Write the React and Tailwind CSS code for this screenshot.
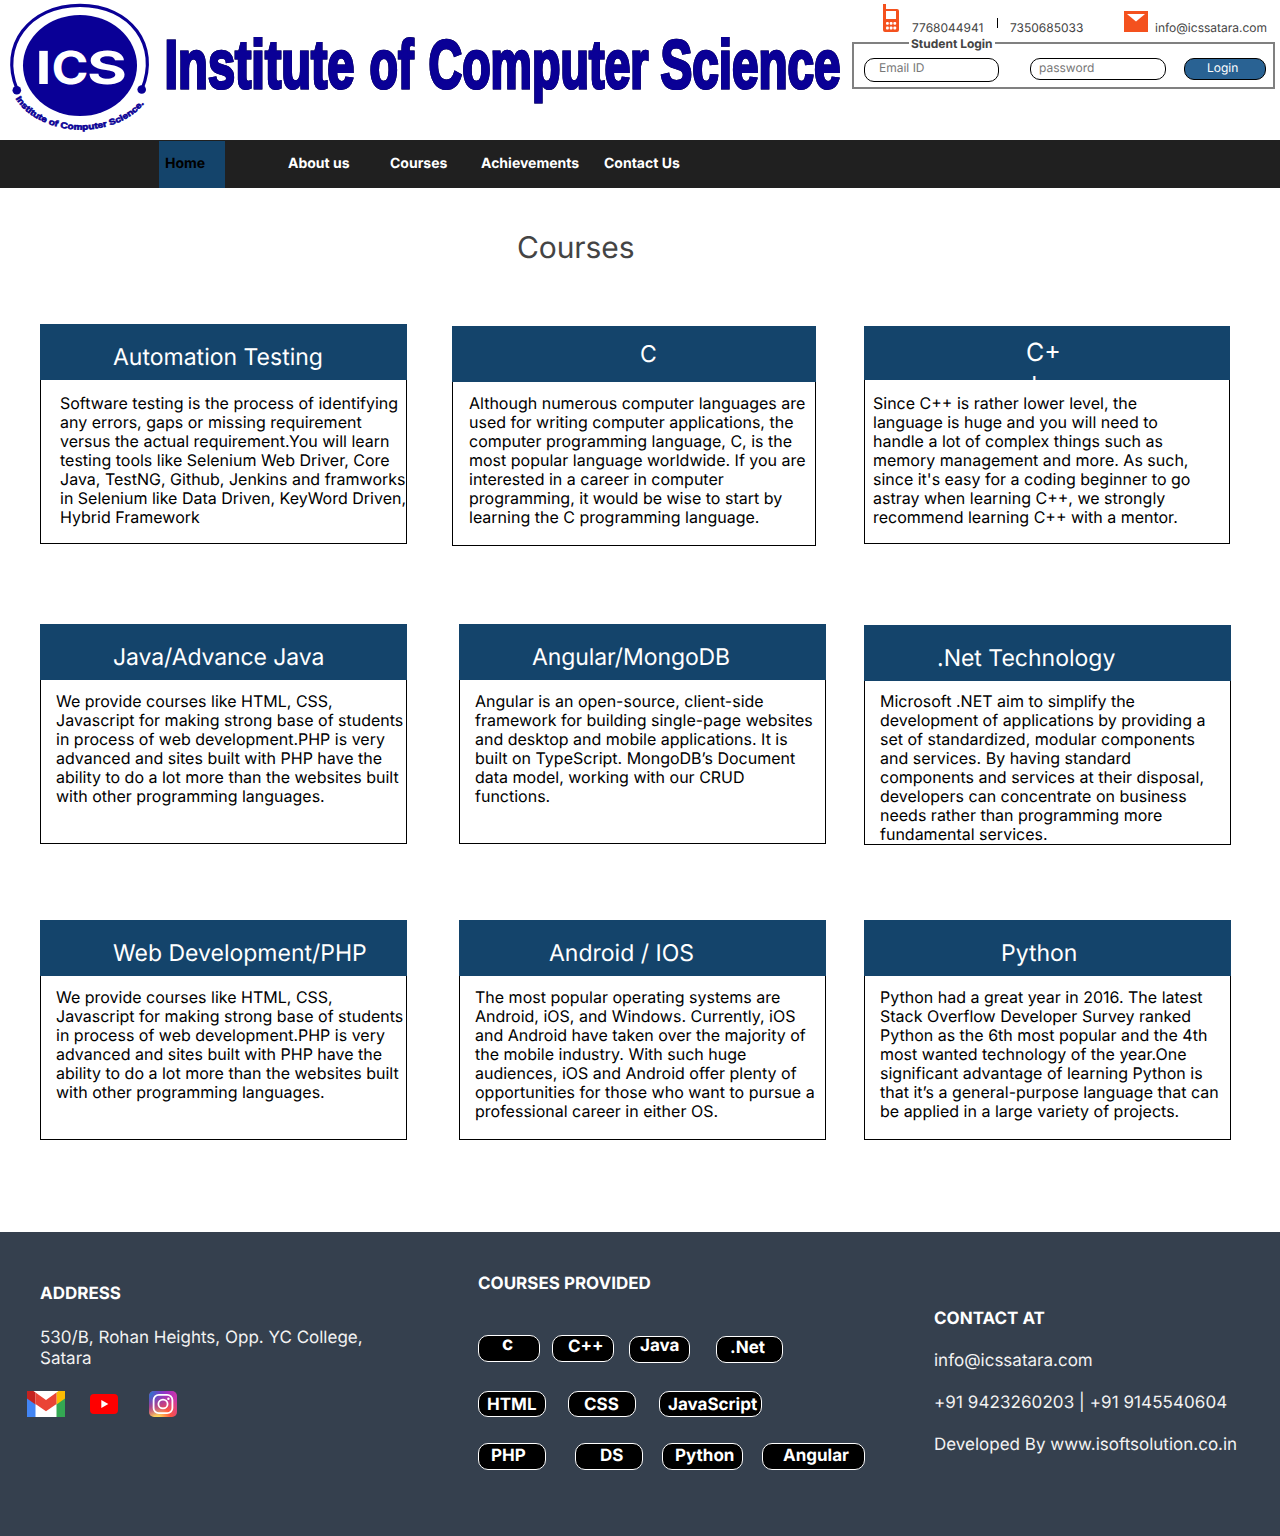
import React from "react";

const titleWords = [
  ["Institute", 164.5, 190],
  ["of", 369.5, 44],
  ["Computer", 428.5, 220],
  ["Science", 660.5, 180],
];

const initials = [
  ["I", 35.5, 16],
  ["C", 51.5, 37],
  ["S", 87, 40],
];

function Logo() {
  return (
    <svg width="850" height="140" viewBox="0 0 850 140" className="block shrink-0">
      <path d="M17 89 C-1 46 29 5.3 80 5.3 C131 5.3 160 46 142 89" fill="none" stroke="#0a0096" strokeWidth="3.2" />
      <circle cx="16.8" cy="90.3" r="4.3" fill="#0a0096" />
      <circle cx="141.7" cy="89.5" r="4.3" fill="#0a0096" />
      <ellipse cx="80" cy="65.5" rx="57" ry="50.5" fill="#0a0096" />
      {initials.map(([t, x, w]) => (
        <text key={t} x={x} y="84.3" fontFamily="Inter, sans-serif" fontWeight="700" fontSize="45.5" fill="#fff" textLength={w} lengthAdjust="spacingAndGlyphs">{t}</text>
      ))}
      <path id="ring" d="M15.5 98.5 A 72 52 0 0 0 147.5 98.5" fill="none" />
      <text fontFamily="'Liberation Sans', sans-serif" fontWeight="700" fontSize="8.4" fill="#0a0096" stroke="#0a0096" strokeWidth="0.6">
        <textPath href="#ring" textLength="146" lengthAdjust="spacingAndGlyphs">Institute of Computer Science.</textPath>
      </text>
      <g fontFamily="'Liberation Sans', sans-serif" fontWeight="700" fontSize="68.5" fill="#0a0096" stroke="#0a0096" strokeWidth="2.8" className="drop-shadow-[0_0_0.7px_#000]">
        {titleWords.map(([t, x, w]) => (
          <text key={t} x={x} y="87.6" textLength={w} lengthAdjust="spacingAndGlyphs">{t}</text>
        ))}
      </g>
    </svg>
  );
}

function PhoneIcon() {
  return (
    <svg width="16" height="28" viewBox="0 0 16 28" className="mt-1 ml-[33px] shrink-0">
      <path fillRule="evenodd" fill="#f4511e" d="M0 0H3V5H14Q16 5 16 7V26Q16 28 14 28H2Q0 28 0 26ZM3 7V15H13V7Z" />
      <g fill="#fff">
        <rect x="3" y="18" width="2.8" height="2.8" rx="1" /><rect x="6.7" y="18" width="2.8" height="2.8" rx="1" /><rect x="10.4" y="18" width="2.8" height="2.8" rx="1" />
        <rect x="3" y="22.6" width="2.8" height="2.8" rx="1" /><rect x="6.7" y="22.6" width="2.8" height="2.8" rx="1" /><rect x="10.4" y="22.6" width="2.8" height="2.8" rx="1" />
      </g>
    </svg>
  );
}

function Header() {
  return (
    <header className="flex h-[140px] bg-white">
      <Logo />
      <div className="w-[430px]">
        <div className="flex h-[42px] items-start whitespace-nowrap text-[12px] leading-[15px] text-[#444]">
          <PhoneIcon />
          <span className="mt-5 ml-[13px] w-[85px]">7768044941</span>
          <span className="mt-[18px] h-[10px] w-px bg-black" />
          <span className="mt-5 ml-3 w-[114px]">7350685033</span>
          <svg width="24" height="21" viewBox="0 0 24 21" className="mt-[11px] shrink-0">
            <path d="M0 0H24V21H0Z" fill="#f4511e" />
            <path d="M3 3H21L12 10.5Z" fill="#fff" />
          </svg>
          <span className="mt-5 ml-[7px]">info@icssatara.com</span>
        </div>
        <div className="relative ml-[2px] flex h-[47px] w-[423px] items-start border-2 border-[#808080] pt-[14px] pl-[10px] text-[12px] leading-[15px] whitespace-nowrap">
          <span className="absolute -top-[8px] left-[55px] bg-white px-[2px] font-bold text-[#444]">Student Login</span>
          <span className="h-6 w-[135px] rounded-[10px] border border-black pt-px pl-[14px] text-[#777]">Email ID</span>
          <span className="ml-[31px] h-[22px] w-[136px] rounded-[10px] border border-black pt-px pl-2 text-[#777]">password</span>
          <span className="ml-[18px] h-[22px] w-[82px] rounded-[10px] border border-black bg-[#296293] pt-px pl-[22px] text-white">Login</span>
        </div>
      </div>
    </header>
  );
}

function Nav() {
  return (
    <nav className="flex h-12 items-start whitespace-nowrap bg-[#202020] text-[14px] leading-[17px] font-bold text-white">
      <a className="mt-px ml-[159px] h-[47px] w-[66px] bg-[#14446b] pt-[14px] pl-[6px] text-black">Home</a>
      <a className="mt-[15px] ml-[63px] w-[102px]">About us</a>
      <a className="mt-[15px] w-[91px]">Courses</a>
      <a className="mt-[15px] w-[123px]">Achievements</a>
      <a className="mt-[15px]">Contact Us</a>
    </nav>
  );
}

const rows = [
  {
    cls: "mt-[57px] h-[300px]",
    cards: [
      {
        box: "ml-10 w-[367px] h-[220px]", head: "h-14 pt-[18px] pl-[73px] text-[23px]", title: ["Automation Testing"], body: "pt-[14px] pl-[19px]",
        lines: ["Software testing is the process of identifying", "any errors, gaps or missing requirement", "versus the actual requirement.You will learn", "testing tools like Selenium Web Driver, Core", "Java, TestNG, Github, Jenkins and framworks", "in Selenium like Data Driven, KeyWord Driven,", "Hybrid Framework"],
      },
      {
        box: "mt-[2px] ml-[45px] w-[364px] h-[220px]", head: "h-14 pt-[13px] pl-[188px] text-[23px]", title: ["C"], body: "pt-3 pl-4",
        lines: ["Although numerous computer languages are", "used for writing computer applications, the", "computer programming language, C, is the", "most popular language worldwide. If you are", "interested in a career in computer", "programming, it would be wise to start by", "learning the C programming language."],
      },
      {
        box: "mt-[2px] ml-12 w-[366px] h-[218px]", head: "h-[54px] pt-[12px] pl-[162px] text-[25px]", title: ["C+", "+"], body: "pt-[14px] pl-2",
        lines: ["Since C++ is rather lower level, the", "language is huge and you will need to", "handle a lot of complex things such as", "memory management and more. As such,", "since it's easy for a coding beginner to go", "astray when learning C++, we strongly", "recommend learning C++ with a mentor."],
      },
    ],
  },
  {
    cls: "h-[296px]",
    cards: [
      {
        box: "ml-10 w-[367px] h-[220px]", head: "h-14 pt-[18px] pl-[73px] text-[23px] tracking-[-0.1px]", title: ["Java/Advance Java"], body: "pt-3 pl-[15px]",
        lines: ["We provide courses like HTML, CSS,", "Javascript for making strong base of students", "in process of web development.PHP is very", "advanced and sites built with PHP have the", "ability to do a lot more than the websites built", "with other programming languages."],
      },
      {
        box: "ml-[52px] w-[367px] h-[220px]", head: "h-14 pt-[18px] pl-[73px] text-[23px] tracking-[-0.1px]", title: ["Angular/MongoDB"], body: "pt-3 pl-[15px]",
        lines: ["Angular is an open-source, client-side", "framework for building single-page websites", "and desktop and mobile applications. It is", "built on TypeScript. MongoDB’s Document", "data model, working with our CRUD", "functions."],
      },
      {
        box: "mt-px ml-[38px] w-[367px] h-[220px]", head: "h-14 pt-[18px] pl-[73px] text-[23px]", title: [".Net Technology"], body: "pt-[11px] pl-[15px]",
        lines: ["Microsoft .NET aim to simplify the", "development of applications by providing a", "set of standardized, modular components", "and services. By having standard", "components and services at their disposal,", "developers can concentrate on business", "needs rather than programming more", "fundamental services."],
      },
    ],
  },
  {
    cls: "h-[312px]",
    cards: [
      {
        box: "ml-10 w-[367px] h-[220px]", head: "h-14 pt-[18px] pl-[73px] text-[23px]", title: ["Web Development/PHP"], body: "pt-3 pl-[15px]",
        lines: ["We provide courses like HTML, CSS,", "Javascript for making strong base of students", "in process of web development.PHP is very", "advanced and sites built with PHP have the", "ability to do a lot more than the websites built", "with other programming languages."],
      },
      {
        box: "ml-[52px] w-[367px] h-[220px]", head: "h-14 pt-[18px] pl-[90px] text-[23px]", title: ["Android / IOS"], body: "pt-3 pl-[15px]",
        lines: ["The most popular operating systems are", "Android, iOS, and Windows. Currently, iOS", "and Android have taken over the majority of", "the mobile industry. With such huge", "audiences, iOS and Android offer plenty of", "opportunities for those who want to pursue a", "professional career in either OS."],
      },
      {
        box: "ml-[38px] w-[367px] h-[220px]", head: "h-14 pt-[18px] pl-[137px] text-[23px]", title: ["Python"], body: "pt-3 pl-[15px]",
        lines: ["Python had a great year in 2016. The latest", "Stack Overflow Developer Survey ranked", "Python as the 6th most popular and the 4th", "most wanted technology of the year.One", "significant advantage of learning Python is", "that it’s a general-purpose language that can", "be applied in a large variety of projects."],
      },
    ],
  },
];

function Card({ card }) {
  return (
    <article className={`flex shrink-0 flex-col whitespace-nowrap ${card.box}`}>
      <h2 className={`shrink-0 overflow-hidden bg-[#14446b] leading-[30px] text-white ${card.head}`}>
        {card.title.map((t, i) => <span key={i} className={i ? "-mt-[2px] block" : "block"}>{t}</span>)}
      </h2>
      <div className={`flex-1 border border-t-0 border-black text-[16px] leading-[19px] text-black ${card.body}`}>
        {card.lines.map((l) => <p key={l}>{l}</p>)}
      </div>
    </article>
  );
}

const chips = [
  { cls: "mt-[51px] h-7", items: [
    ["c", "w-[62px] h-[27px] pl-[23px] leading-[15px] text-[19px]"],
    ["C++", "ml-3 w-[62px] h-[27px] pl-[15px] leading-[22px]"],
    ["Java", "mt-px ml-[15px] w-[61px] h-[27px] pl-[10px] leading-[18px]"],
    [".Net", "mt-px ml-[26px] w-[67px] h-[27px] pl-[13px] leading-[22px]"],
  ] },
  { cls: "mt-7 h-[26px]", items: [
    ["HTML", "w-[68px] h-[26px] pl-2 leading-[26px]"],
    ["CSS", "ml-[22px] w-[68px] h-[26px] pl-[15px] leading-[26px]"],
    ["JavaScript", "ml-[23px] w-[103px] h-[26px] pl-2 leading-[26px]"],
  ] },
  { cls: "mt-[26px] h-[27px]", items: [
    ["PHP", "w-[68px] h-[27px] pl-3 leading-[24px]"],
    ["DS", "ml-[29px] w-[68px] h-[27px] pl-6 leading-[24px]"],
    ["Python", "ml-[19px] w-[81px] h-[27px] pl-3 leading-[24px]"],
    ["Angular", "ml-[19px] w-[103px] h-[27px] pl-5 leading-[24px]"],
  ] },
];

function GmailIcon() {
  return (
    <svg width="38" height="26" viewBox="0 0 38 26">
      <path d="M0 0H38V26H0Z" fill="#fff" />
      <path d="M0 6L8.5 13V26H0Z" fill="#4285f4" />
      <path d="M38 6L29.5 13V26H38Z" fill="#34a853" />
      <path d="M0 0H6.5L8.5 1.5V13.5L0 7.5Z" fill="#c5221f" />
      <path d="M38 0H31.5L29.5 1.5V13.5L38 7.5Z" fill="#fbbc04" />
      <path d="M8.5 1.5L19 9L29.5 1.5V13L19 20.2L8.5 13Z" fill="#ea4335" />
    </svg>
  );
}

function InstagramIcon() {
  return (
    <svg width="28" height="26" viewBox="0 0 28 26" className="ml-[31px]">
      <defs>
        <radialGradient id="warm" cx="0.27" cy="1.05" r="1">
          <stop offset="0" stopColor="#ffdd55" /><stop offset="0.12" stopColor="#ffd454" /><stop offset="0.5" stopColor="#ff543e" /><stop offset="1" stopColor="#c837ab" />
        </radialGradient>
        <radialGradient id="cool" cx="-0.05" cy="0.05" r="1">
          <stop offset="0" stopColor="#3771c8" /><stop offset="0.13" stopColor="#3771c8" /><stop offset="1" stopColor="#6600ff" stopOpacity="0" />
        </radialGradient>
      </defs>
      <rect width="28" height="26" rx="5" fill="url(#warm)" />
      <rect width="28" height="26" rx="5" fill="url(#cool)" />
      <g fill="none" stroke="#fff" strokeWidth="1.8">
        <rect x="4.6" y="3.8" width="18.8" height="18.4" rx="5.2" />
        <ellipse cx="14" cy="13" rx="4.6" ry="4.4" />
      </g>
      <circle cx="19.4" cy="7.8" r="1.2" fill="#fff" />
    </svg>
  );
}

function Footer() {
  return (
    <footer className="flex h-[304px] items-start whitespace-nowrap bg-[#35404e] text-[17px] leading-[21px] text-white">
      <section className="w-[478px] pt-[52px]">
        <h3 className="ml-10 font-bold">ADDRESS</h3>
        <p className="mt-[23px] ml-10 text-[#f2f2f2]">530/B, Rohan Heights, Opp. YC College,<br />Satara</p>
        <div className="mt-[21px] ml-[27px] flex items-start">
          <GmailIcon />
          <svg width="28" height="20" viewBox="0 0 28 20" className="mt-[3px] ml-[25px]">
            <rect width="28" height="20" rx="4" fill="#f00" />
            <path d="M11.3 6L18.3 10L11.3 14Z" fill="#fff" />
          </svg>
          <InstagramIcon />
        </div>
      </section>
      <section className="w-[456px] pt-[42px]">
        <h3 className="font-bold">COURSES PROVIDED</h3>
        <div className="-mt-[11px]">
          {chips.map((row, i) => (
            <div key={i} className={`flex items-start ${row.cls}`}>
              {row.items.map(([label, cls]) => (
                <span key={label} className={`shrink-0 rounded-[10px] border border-white bg-black font-bold ${cls}`}>{label}</span>
              ))}
            </div>
          ))}
        </div>
      </section>
      <section className="pt-[77px]">
        <h3 className="font-bold">CONTACT AT</h3>
        <p className="mt-[21px] text-[#f2f2f2]">info@icssatara.com</p>
        <p className="mt-[21px] tracking-[0.08px] text-[#f2f2f2]">+91 9423260203 | +91 9145540604</p>
        <p className="mt-[21px] text-[#f2f2f2]">Developed By www.isoftsolution.co.in</p>
      </section>
    </footer>
  );
}

export default function App() {
  return (
    <div className="w-[1280px] overflow-hidden bg-white font-['Inter',sans-serif] [text-rendering:geometricPrecision]">
      <Header />
      <Nav />
      <main className="h-[1044px] pt-[42px]">
        <h1 className="ml-[517px] text-[30px] leading-[37px] tracking-[-0.1px] text-[#444]">Courses</h1>
        {rows.map((row, i) => (
          <div key={i} className={`flex items-start ${row.cls}`}>
            {row.cards.map((c) => <Card key={c.title[0]} card={c} />)}
          </div>
        ))}
      </main>
      <Footer />
    </div>
  );
}
